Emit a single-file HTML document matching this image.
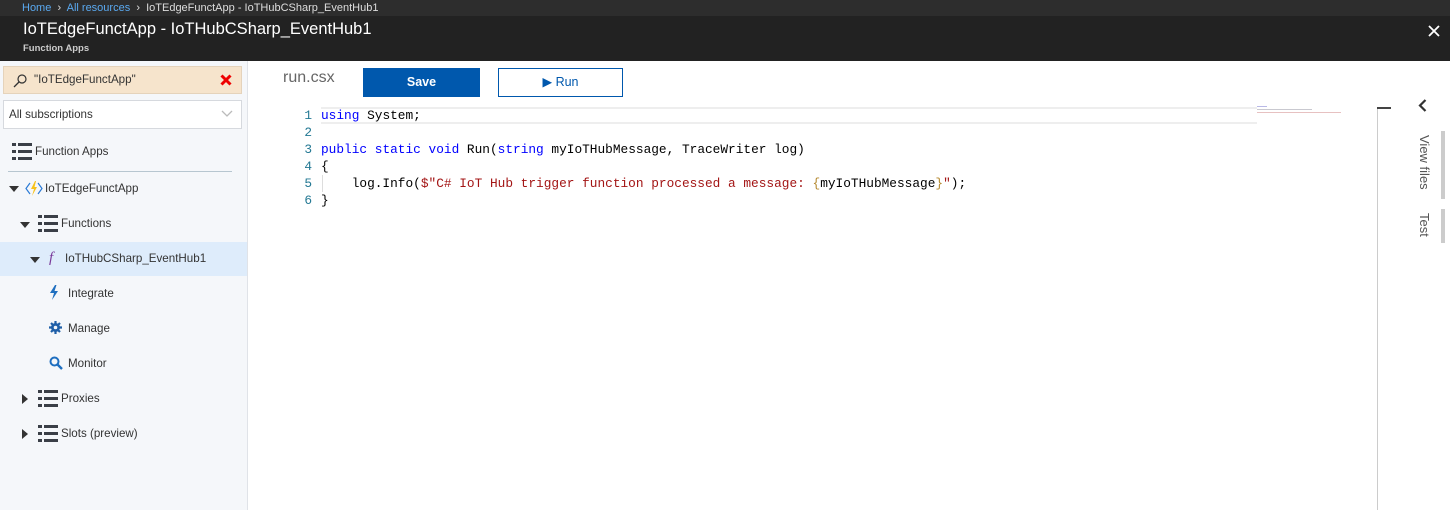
<!DOCTYPE html>
<html><head><meta charset="utf-8"><style>
*{margin:0;padding:0;box-sizing:border-box}
body{width:1450px;height:510px;overflow:hidden;background:#fff;font-family:"Liberation Sans",sans-serif;position:relative}
.abs{position:absolute}
.crumb{left:0;top:0;width:1450px;height:16px;background:#2d2d2d;font-size:11px;color:#ddd;line-height:16px;padding-left:22px;white-space:nowrap}
.crumb a{color:#5aa9f0;text-decoration:none}
.hdr{left:0;top:16px;width:1450px;height:45px;background:#222}
.side{left:0;top:61px;width:248px;height:449px;background:#f5f7fa;border-right:1px solid #e0e3e8}
.item{position:absolute;font-size:11.6px;color:#333;white-space:nowrap}
.lst{position:absolute;width:20px;height:17px}
.lst i{position:absolute;background:#3a3f47;height:3px}
.tri-d{position:absolute;width:0;height:0;border-left:5px solid transparent;border-right:5px solid transparent;border-top:6px solid #333}
.tri-r{position:absolute;width:0;height:0;border-top:5px solid transparent;border-bottom:5px solid transparent;border-left:6px solid #333}
.code{font-family:"Liberation Mono",monospace;font-size:12.8px;line-height:17px;position:absolute;white-space:pre;color:#000}
.ln{color:#237893;text-align:right;width:20px}
.k{color:#0000ff}.s{color:#a31515}.b{color:#b5892f}
</style></head><body>
<div class="abs crumb"><a>Home</a> &nbsp;›&nbsp; <a>All resources</a> &nbsp;›&nbsp; IoTEdgeFunctApp - IoTHubCSharp_EventHub1</div>
<div class="abs hdr">
 <div class="abs" style="left:23px;top:4px;font-size:16.5px;color:#fff">IoTEdgeFunctApp - IoTHubCSharp_EventHub1</div>
 <div class="abs" style="left:23px;top:27px;font-size:9.5px;color:#ccc;font-weight:bold">Function Apps</div>
 <svg class="abs" style="left:1428px;top:9px" width="12" height="12"><path d="M1 1L11 11M11 1L1 11" stroke="#fff" stroke-width="1.8"/></svg>
</div>
<div class="abs side">
 <div class="abs" style="left:3px;top:5px;width:239px;height:28px;background:#f6e4cc;border:1px solid #e5d3bb"></div>
 <svg class="abs" style="left:13px;top:13px" width="14" height="14"><circle cx="9" cy="5" r="4" fill="none" stroke="#333" stroke-width="1.2"/><path d="M6 8L1 13" stroke="#333" stroke-width="1.3"/></svg>
 <div class="item" style="left:34px;top:12px">"IoTEdgeFunctApp"</div>
 <svg class="abs" style="left:220px;top:13px" width="12" height="12"><path d="M1.5 1.5L10.5 10.5M10.5 1.5L1.5 10.5" stroke="#e00" stroke-width="3"/></svg>
 <div class="abs" style="left:3px;top:39px;width:239px;height:29px;background:#fff;border:1px solid #d6d9de"></div>
 <div class="item" style="left:9px;top:47px">All subscriptions</div>
 <svg class="abs" style="left:221px;top:49px" width="12" height="8"><path d="M1 1L6 6L11 1" stroke="#bbb" fill="none" stroke-width="1.3"/></svg>

 <div class="lst" style="left:12px;top:82px"><i style="left:0;top:0;width:4px"></i><i style="left:6px;top:0;width:14px"></i><i style="left:0;top:7px;width:4px"></i><i style="left:6px;top:7px;width:14px"></i><i style="left:0;top:14px;width:4px"></i><i style="left:6px;top:14px;width:14px"></i></div>
 <div class="item" style="left:35px;top:84px">Function Apps</div>
 <div class="abs" style="left:8px;top:110px;width:224px;height:1px;background:#b7c6d0"></div>

 <div class="tri-d" style="left:9px;top:125px"></div>
 <svg class="abs" style="left:25px;top:119px" width="18" height="17"><path d="M5 3L1 8.5L5 14M13 3L17 8.5L13 14" stroke="#2b7bd6" fill="none" stroke-width="1.2"/><path d="M10 1L6 9H9L7 16L12 7H9.5L11 1Z" fill="#f7c21a"/></svg>
 <div class="item" style="left:45px;top:121px">IoTEdgeFunctApp</div>

 <div class="tri-d" style="left:20px;top:161px"></div>
 <div class="lst" style="left:38px;top:154px"><i style="left:0;top:0;width:4px"></i><i style="left:6px;top:0;width:14px"></i><i style="left:0;top:7px;width:4px"></i><i style="left:6px;top:7px;width:14px"></i><i style="left:0;top:14px;width:4px"></i><i style="left:6px;top:14px;width:14px"></i></div>
 <div class="item" style="left:61px;top:156px">Functions</div>

 <div class="abs" style="left:0;top:181px;width:247px;height:34px;background:#deecfb"></div>
 <div class="tri-d" style="left:30px;top:196px"></div>
 <div class="item" style="left:49px;top:189px;font-family:'Liberation Serif',serif;font-style:italic;color:#7a3a9a;font-size:15px">f</div>
 <div class="item" style="left:65px;top:191px">IoTHubCSharp_EventHub1</div>

 <svg class="abs" style="left:49px;top:224px" width="10" height="15"><path d="M6 0L1 8H5L3 15L9 6H5.5L7.5 0Z" fill="#1f6fc0"/></svg>
 <div class="item" style="left:68px;top:226px">Integrate</div>
 <svg class="abs" style="left:49px;top:260px" width="13" height="13"><circle cx="6.5" cy="6.5" r="4.5" fill="#1f5fa8"/><path d="M6.5 0V13M0 6.5H13M2 2L11 11M11 2L2 11" stroke="#1f5fa8" stroke-width="2.2"/><circle cx="6.5" cy="6.5" r="1.8" fill="#f5f7fa"/></svg>
 <div class="item" style="left:68px;top:261px">Manage</div>
 <svg class="abs" style="left:49px;top:295px" width="14" height="14"><circle cx="5.5" cy="5.5" r="4" fill="none" stroke="#1f6fc0" stroke-width="2"/><path d="M8.5 8.5L13 13" stroke="#1f6fc0" stroke-width="2.4"/></svg>
 <div class="item" style="left:68px;top:296px">Monitor</div>

 <div class="tri-r" style="left:22px;top:333px"></div>
 <div class="lst" style="left:38px;top:329px"><i style="left:0;top:0;width:4px"></i><i style="left:6px;top:0;width:14px"></i><i style="left:0;top:7px;width:4px"></i><i style="left:6px;top:7px;width:14px"></i><i style="left:0;top:14px;width:4px"></i><i style="left:6px;top:14px;width:14px"></i></div>
 <div class="item" style="left:61px;top:331px">Proxies</div>
 <div class="tri-r" style="left:22px;top:368px"></div>
 <div class="lst" style="left:38px;top:364px"><i style="left:0;top:0;width:4px"></i><i style="left:6px;top:0;width:14px"></i><i style="left:0;top:7px;width:4px"></i><i style="left:6px;top:7px;width:14px"></i><i style="left:0;top:14px;width:4px"></i><i style="left:6px;top:14px;width:14px"></i></div>
 <div class="item" style="left:61px;top:366px">Slots (preview)</div>
</div>

<div class="abs" style="left:283px;top:69px;font-size:16px;color:#666">run.csx</div>
<div class="abs" style="left:363px;top:68px;width:117px;height:29px;background:#0058ad;color:#fff;font-size:12.5px;font-weight:bold;text-align:center;line-height:29px">Save</div>
<div class="abs" style="left:498px;top:68px;width:125px;height:29px;border:1px solid #0058ad;color:#0058ad;font-size:12.5px;text-align:center;line-height:27px">▶ Run</div>

<div class="abs" style="left:321px;top:107px;width:936px;height:17px;border:2px solid #eee;border-width:2px 0"></div>
<div class="code ln" style="left:292px;top:107px">1
2
3
4
5
6</div>
<div class="abs" style="left:322px;top:175px;width:1px;height:17px;background:#ddd"></div>
<div class="code" style="left:321px;top:107px"><span class="k">using</span> System;

<span class="k">public</span> <span class="k">static</span> <span class="k">void</span> Run(<span class="k">string</span> myIoTHubMessage, TraceWriter log)
{
    log.Info(<span class="s">$"C# IoT Hub trigger function processed a message: </span><span class="b">{</span>myIoTHubMessage<span class="b">}</span><span class="s">"</span>);
}</div>
<div class="abs" style="left:1257px;top:106px;width:86px;height:12px;overflow:hidden;opacity:.45"><div style="height:1px;width:10px;background:#66c;margin-bottom:2px"></div><div style="height:1px;width:55px;background:#889;margin-bottom:2px"></div><div style="height:1px;width:84px;background:#c77"></div></div>

<div class="abs" style="left:1377px;top:107px;width:1px;height:403px;background:#ccc"></div>
<div class="abs" style="left:1377px;top:107px;width:14px;height:2px;background:#444"></div>
<svg class="abs" style="left:1418px;top:99px" width="9" height="13"><path d="M7.5 1L2 6.5L7.5 12" stroke="#333" fill="none" stroke-width="2.2"/></svg>
<div class="abs" style="left:1441px;top:131px;width:4px;height:68px;background:#ccc"></div>
<div class="abs" style="left:1441px;top:209px;width:4px;height:34px;background:#ccc"></div>
<div class="abs" style="left:1417px;top:135px;writing-mode:vertical-rl;font-size:13px;color:#555">View files</div>
<div class="abs" style="left:1417px;top:213px;writing-mode:vertical-rl;font-size:13px;color:#555">Test</div>
</body></html>
